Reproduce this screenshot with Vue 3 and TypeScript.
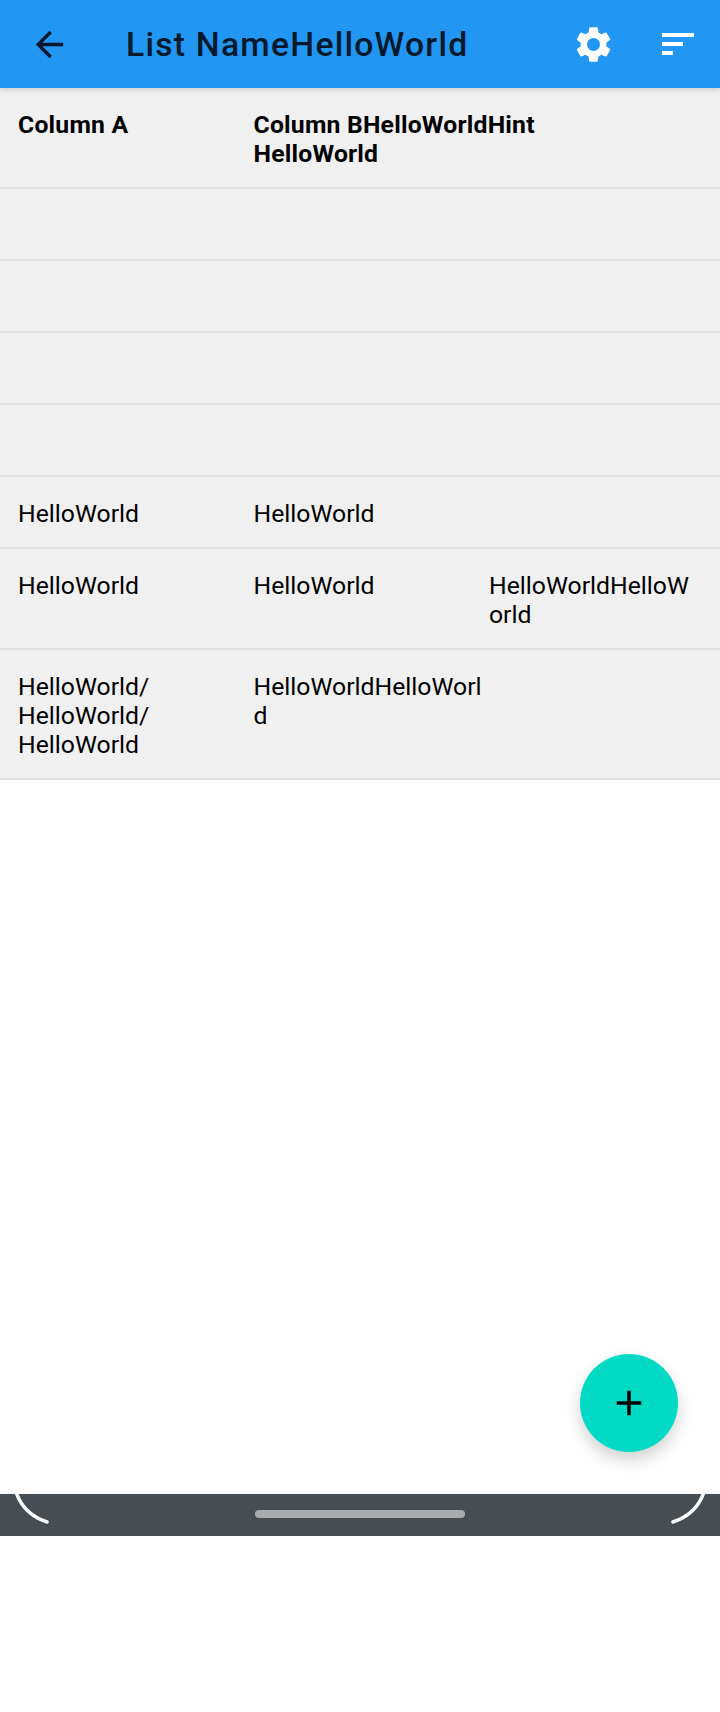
<template>
  <div class="page">
    <header class="app-bar">
      <button class="icon-btn back" aria-label="Back">
        <svg viewBox="0 0 24 24" class="icon-back"><path d="M20 11H7.83l5.59-5.59L12 4l-8 8 8 8 1.41-1.41L7.83 13H20v-2z" /></svg>
      </button>
      <h1 class="title">List NameHelloWorld</h1>
      <button class="icon-btn settings" aria-label="Settings">
        <svg viewBox="0 0 24 24" class="icon-gear">
          <path d="M19.14 12.94c.04-.3.06-.61.06-.94 0-.32-.02-.64-.07-.94l2.03-1.58c.18-.14.23-.41.12-.61l-1.92-3.32c-.12-.22-.37-.29-.59-.22l-2.39.96c-.5-.38-1.03-.7-1.62-.94l-.36-2.54c-.04-.24-.24-.41-.48-.41h-3.84c-.24 0-.43.17-.47.41l-.36 2.54c-.59.24-1.13.57-1.62.94l-2.39-.96c-.22-.08-.47 0-.59.22L2.74 8.87c-.12.21-.08.47.12.61l2.03 1.58c-.05.3-.09.63-.09.94s.02.64.07.94l-2.03 1.58c-.18.14-.23.41-.12.61l1.92 3.32c.12.22.37.29.59.22l2.39-.96c.5.38 1.03.7 1.62.94l.36 2.54c.05.24.24.41.48.41h3.84c.24 0 .44-.17.47-.41l.36-2.54c.59-.24 1.13-.56 1.62-.94l2.39.96c.22.08.47 0 .59-.22l1.92-3.32c.12-.22.07-.47-.12-.61l-2.01-1.58zM12 15.6c-1.98 0-3.6-1.62-3.6-3.6s1.62-3.6 3.6-3.6 3.6 1.62 3.6 3.6-1.62 3.6-3.6 3.6z" />
        </svg>
      </button>
      <button class="icon-btn sort" aria-label="Sort">
        <span class="sort-line long"></span>
        <span class="sort-line mid"></span>
        <span class="sort-line short"></span>
      </button>
    </header>

    <main class="content">
      <div class="table">
        <div class="row head">
          <div class="cell">Column A</div>
          <div class="cell wide">Column BHelloWorldHint HelloWorld</div>
        </div>
        <div v-for="(row, i) in rows" :key="i" class="row">
          <div v-for="(cell, j) in row" :key="j" class="cell">{{ cell }}</div>
        </div>
      </div>
      <button class="fab" aria-label="Add">
        <svg viewBox="0 0 24 24" class="icon-add"><path d="M19 13h-6v6h-2v-6H5v-2h6V5h2v6h6v2z" /></svg>
      </button>
    </main>

    <footer class="nav-bar">
      <svg class="corner left" viewBox="0 0 50 34"><path d="M16 -2C21 13 32 23 47 28" /></svg>
      <div class="home-indicator"></div>
      <svg class="corner right" viewBox="0 0 50 34"><path d="M16 -2C21 13 32 23 47 28" /></svg>
    </footer>
    <div class="below"></div>
  </div>
</template>

<script setup lang="ts">
const rows: string[][] = [
  ['', '', ''],
  ['', '', ''],
  ['', '', ''],
  ['', '', ''],
  ['HelloWorld', 'HelloWorld', ''],
  ['HelloWorld', 'HelloWorld', 'HelloWorldHelloWorld'],
  ['HelloWorld/ HelloWorld/ HelloWorld', 'HelloWorldHelloWorld', '']
]
</script>

<style>
html,
body {
  margin: 0;
  background: #fff;
}
</style>

<style scoped>
.page {
  width: 720px;
  height: 1712px;
  display: flex;
  flex-direction: column;
  font-family: Roboto, "Liberation Sans", sans-serif;
  overflow: hidden;
}

.app-bar {
  height: 88px;
  flex: none;
  display: flex;
  align-items: center;
  background: #2196f3;
  box-shadow: 0 2px 5px rgba(0, 0, 0, 0.14);
  position: relative;
  z-index: 1;
}

.icon-btn {
  border: 0;
  padding: 0;
  background: none;
  display: flex;
}

.back {
  margin-left: 29px;
}

.icon-back {
  width: 41px;
  height: 41px;
  fill: #04192c;
}

.title {
  margin: 0 0 0 56px;
  flex: 1;
  font-size: 33.75px;
  font-weight: 500;
  letter-spacing: 1.2px;
  color: #04192c;
}

.settings {
  margin-right: 47px;
}

.icon-gear {
  width: 43px;
  height: 43px;
  fill: #fff;
}

.sort {
  width: 32px;
  margin-right: 26px;
  flex-direction: column;
  gap: 5px;
}

.sort-line {
  height: 4px;
  background: #fff;
}

.long {
  width: 32px;
}

.mid {
  width: 21px;
}

.short {
  width: 11px;
}

.content {
  flex: 1;
  position: relative;
}

.row {
  display: grid;
  grid-template-columns: 232px 232px 1fr;
  column-gap: 3.5px;
  padding: 22px 18px 19px;
  min-height: 29px;
  background: #f0f0f0;
  border-bottom: 2px solid #e0e0e0;
}

.head {
  font-weight: 700;
  letter-spacing: 0.2px;
}

.cell {
  font-size: 24.75px;
  line-height: 29px;
  color: #000;
  overflow-wrap: anywhere;
}

.wide {
  grid-column: 2 / 4;
  padding-right: 150px;
}

.fab {
  position: absolute;
  left: 580px;
  bottom: 42px;
  width: 98px;
  height: 98px;
  border: 0;
  padding: 0;
  border-radius: 50%;
  background: #03dac6;
  box-shadow: 0 8px 16px rgba(0, 0, 0, 0.18);
  display: flex;
  align-items: center;
  justify-content: center;
}

.icon-add {
  width: 42px;
  height: 42px;
  fill: #000;
}

.nav-bar {
  height: 42px;
  flex: none;
  background: #464e53;
  display: flex;
  align-items: center;
  justify-content: center;
  position: relative;
}

.home-indicator {
  width: 210px;
  height: 8px;
  border-radius: 4px;
  background: #a8acae;
  margin-top: -2px;
}

.corner {
  position: absolute;
  top: 0;
  width: 50px;
  height: 34px;
  fill: none;
  stroke: #fff;
  stroke-width: 3.5;
  stroke-linecap: round;
}

.corner.left {
  left: 0;
}

.corner.right {
  right: 0;
  transform: scaleX(-1);
}

.below {
  height: 176px;
  flex: none;
  background: #fff;
}
</style>
